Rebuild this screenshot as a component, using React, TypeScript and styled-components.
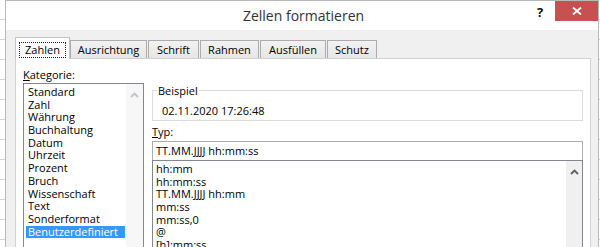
import React from "react";
import styled, { createGlobalStyle } from "styled-components";

const GlobalStyle = createGlobalStyle`
  html, body { margin: 0; padding: 0; }
  body { font-family: "Open Sans", "Noto Sans", sans-serif; background: #fff; color: #000; }
`;

const Screen = styled.div`
  width: 600px;
  height: 247px;
  overflow: hidden;
  display: flex;
  background-color: #fff;
  background-image: repeating-linear-gradient(to bottom, transparent 0 19px, #d4d4d4 19px 20px);
`;

const Window = styled.div`
  margin-left: 5px;
  width: 594px;
  flex: none;
  box-sizing: border-box;
  border: 1px solid #b9b9b9;
  border-bottom: none;
  display: flex;
  flex-direction: column;
  background: #f0f0f0;
`;

const TitleBar = styled.div`
  height: 29px;
  flex: none;
  background: #fff;
  display: grid;
  grid-template-columns: 1fr auto 1fr;
  align-items: start;
`;

const Title = styled.div`
  grid-column: 2;
  font-size: 14px;
  line-height: 29px;
  color: #333;
  white-space: nowrap;
  padding-left: 3px;
`;

const Caption = styled.div`
  grid-column: 3;
  justify-self: end;
  display: flex;
`;

const HelpButton = styled.div`
  width: 30px;
  height: 22px;
  line-height: 22px;
  text-align: center;
  font-size: 13px;
  font-weight: 700;
  color: #111;
`;

const CloseButton = styled.div`
  width: 43px;
  height: 20px;
  background: #c75050;
  display: flex;
  align-items: center;
  justify-content: center;
`;

const Body = styled.div`
  flex: 1;
  padding: 7px 7px 0 9px;
`;

const TabStrip = styled.div`
  display: flex;
  align-items: flex-end;
  gap: 1px;
  height: 21px;
`;

const Tab = styled.div<{ $w: number; $active?: boolean }>`
  position: relative;
  z-index: ${(p) => (p.$active ? 1 : 0)};
  width: ${(p) => p.$w}px;
  height: ${(p) => (p.$active ? 22 : 18)}px;
  box-sizing: border-box;
  border: 1px solid ${(p) => (p.$active ? "#c4c4c4" : "#acacac")};
  border-bottom: none;
  margin-bottom: ${(p) => (p.$active ? -1 : 0)}px;
  margin-right: ${(p) => (p.$active ? -1 : 0)}px;
  padding-top: ${(p) => (p.$active ? 4 : 0)}px;
  background: ${(p) => (p.$active ? "#fff" : "linear-gradient(#f2f2f2, #e6e6e6)")};
  font-size: 11px;
  line-height: 17px;
  display: flex;
  justify-content: center;
  align-items: ${(p) => (p.$active ? "flex-start" : "center")};
  white-space: nowrap;
`;

const FocusRing = styled.span`
  border: 1px dotted #222;
  padding: 0 5px;
  line-height: 14px;
`;

const Panel = styled.div`
  width: 576px;
  height: 300px;
  box-sizing: border-box;
  border: 1px solid #d2d2d2;
  border-bottom: none;
  background: #fff;
  padding: 8px 7px 0;
  display: flex;
  gap: 8px;
`;

const LeftCol = styled.div`
  width: 121px;
  flex: none;
`;

const RightCol = styled.div`
  flex: 1;
  min-width: 0;
  padding-top: 16px;
  display: flex;
  flex-direction: column;
`;

const FieldLabel = styled.div<{ $gap?: number }>`
  font-size: 11px;
  line-height: 16px;
  height: 16px;
  margin-top: ${(p) => p.$gap ?? 0}px;
`;

const ListBox = styled.div`
  height: 200px;
  box-sizing: border-box;
  border: 1px solid #828790;
  display: flex;
`;

const ListItems = styled.div<{ $pad: number }>`
  flex: 1;
  min-width: 0;
  padding: 2px 1px 0 ${(p) => p.$pad}px;
`;

const Item = styled.div<{ $selected?: boolean; $indent: number }>`
  height: 12.7px;
  line-height: 12.7px;
  font-size: 11px;
  padding-left: ${(p) => p.$indent}px;
  white-space: nowrap;
  background: ${(p) => (p.$selected ? "#3399ff" : "transparent")};
  color: ${(p) => (p.$selected ? "#fff" : "#000")};
`;

const ScrollTrack = styled.div<{ $w: number; $tone: string }>`
  width: ${(p) => p.$w}px;
  flex: none;
  background: ${(p) => p.$tone};
`;

const ScrollArrow = styled.div`
  height: 21px;
  display: flex;
  align-items: center;
  justify-content: center;
`;

const Group = styled.fieldset`
  margin: 0;
  padding: 0;
  min-width: 0;
  border: 1px solid #dcdcdc;
`;

const GroupTitle = styled.legend`
  margin-left: 4px;
  padding: 0 1px;
  font-size: 11px;
  line-height: 15px;
`;

const Sample = styled.div`
  padding: 5px 0 2px 9px;
  font-size: 11px;
  line-height: 15px;
`;

const TypeField = styled.div`
  margin-top: 1px;
  height: 19px;
  box-sizing: border-box;
  border: 1px solid #abadb3;
  border-bottom: none;
  padding: 0 3px;
  font-size: 11px;
  line-height: 18px;
  white-space: nowrap;
`;

const Chevron = ({ color }: { color: string }) => (
  <svg width="9" height="6" viewBox="0 0 9 6">
    <path d="M1 5 L4.5 1.6 L8 5" fill="none" stroke={color} strokeWidth="1.9" />
  </svg>
);

const CloseGlyph = () => (
  <svg width="10" height="8" viewBox="0 0 10 8">
    <path d="M1 0.5 L9 7.5 M9 0.5 L1 7.5" stroke="#fff" strokeWidth="1.8" />
  </svg>
);

const tabs = [
  { label: "Zahlen", w: 55, active: true },
  { label: "Ausrichtung", w: 77 },
  { label: "Schrift", w: 51 },
  { label: "Rahmen", w: 59 },
  { label: "Ausfüllen", w: 66 },
  { label: "Schutz", w: 50 },
];

const categories = [
  "Standard",
  "Zahl",
  "Währung",
  "Buchhaltung",
  "Datum",
  "Uhrzeit",
  "Prozent",
  "Bruch",
  "Wissenschaft",
  "Text",
  "Sonderformat",
  "Benutzerdefiniert",
];

const formats = ["hh:mm", "hh:mm:ss", "TT.MM.JJJJ hh:mm", "mm:ss", "mm:ss,0", "@", "[h]:mm:ss"];

export default function App() {
  return (
    <>
      <GlobalStyle />
      <Screen>
        <Window>
          <TitleBar>
            <Title>Zellen formatieren</Title>
            <Caption>
              <HelpButton>?</HelpButton>
              <CloseButton>
                <CloseGlyph />
              </CloseButton>
            </Caption>
          </TitleBar>
          <Body>
            <TabStrip>
              {tabs.map((t) => (
                <Tab key={t.label} $w={t.w} $active={t.active}>
                  {t.active ? <FocusRing>{t.label}</FocusRing> : t.label}
                </Tab>
              ))}
            </TabStrip>
            <Panel>
              <LeftCol>
                <FieldLabel>
                  <u>K</u>ategorie:
                </FieldLabel>
                <ListBox>
                  <ListItems $pad={2}>
                    {categories.map((c) => (
                      <Item key={c} $indent={2} $selected={c === "Benutzerdefiniert"}>
                        {c}
                      </Item>
                    ))}
                  </ListItems>
                  <ScrollTrack $w={17} $tone="#f7f7f7">
                    <ScrollArrow>
                      <Chevron color="#c4c4c4" />
                    </ScrollArrow>
                  </ScrollTrack>
                </ListBox>
              </LeftCol>
              <RightCol>
                <Group>
                  <GroupTitle>Beispiel</GroupTitle>
                  <Sample>02.11.2020 17:26:48</Sample>
                </Group>
                <FieldLabel $gap={3}>
                  <u>T</u>yp:
                </FieldLabel>
                <TypeField>TT.MM.JJJJ hh:mm:ss</TypeField>
                <ListBox>
                  <ListItems $pad={3}>
                    {formats.map((f) => (
                      <Item key={f} $indent={0}>
                        {f}
                      </Item>
                    ))}
                  </ListItems>
                  <ScrollTrack $w={16} $tone="#f0f0f0">
                    <ScrollArrow>
                      <Chevron color="#606060" />
                    </ScrollArrow>
                  </ScrollTrack>
                </ListBox>
              </RightCol>
            </Panel>
          </Body>
        </Window>
      </Screen>
    </>
  );
}
